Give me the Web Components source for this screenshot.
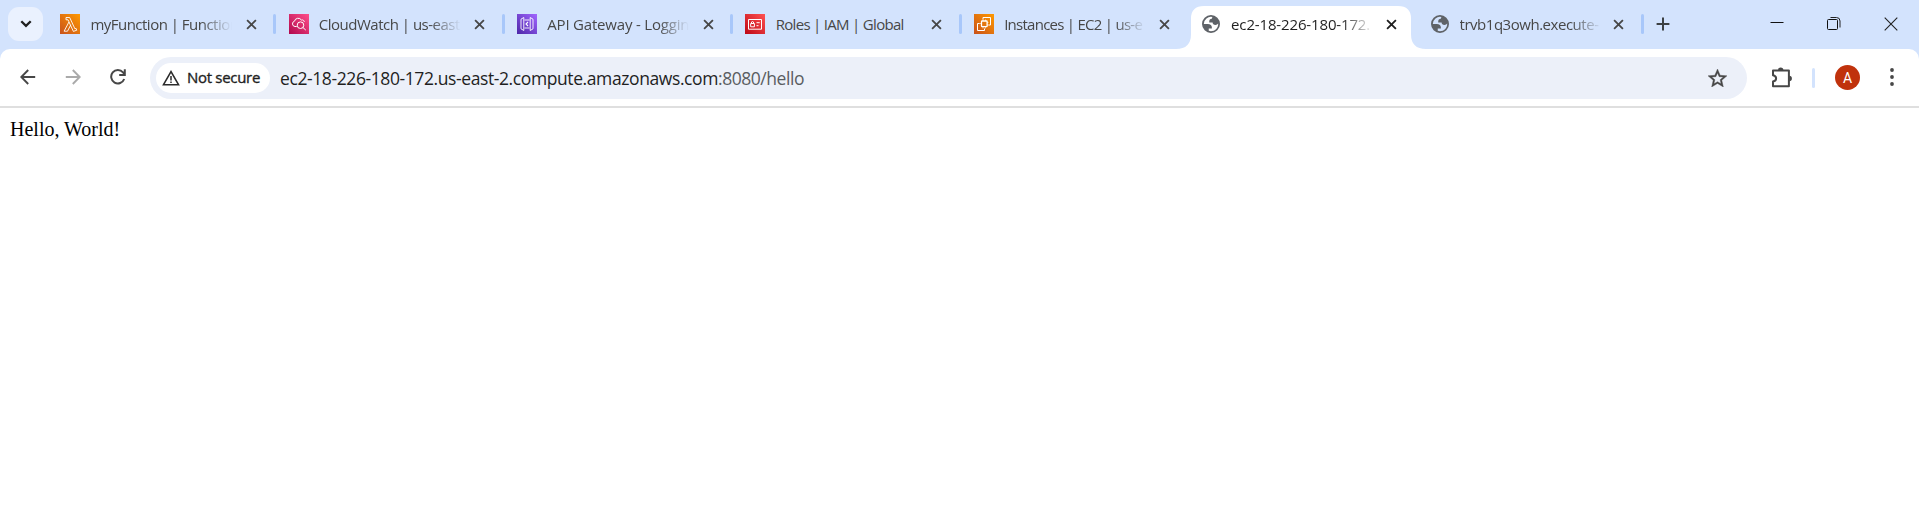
<!DOCTYPE html>
<html lang="en">
<head>
<meta charset="utf-8">
<title>ec2-18-226-180-172.us-east-2.compute.amazonaws.com:8080/hello</title>
<style>
html,body{margin:0;height:100%;overflow:hidden;background:#fff}
</style>
</head>
<body>
<browser-window></browser-window>
<script>
const define=(name,html,init)=>customElements.define(name,class extends HTMLElement{
  connectedCallback(){
    if(this.shadowRoot)return;
    this.attachShadow({mode:'open'}).innerHTML=typeof html==='function'?html(this):html;
    if(init)init.call(this,this.shadowRoot);
  }
});

const ICONS={
  chevron:['0 0 12 8','<path d="M1.3 1.3 6 5.9l4.7-4.6" fill="none" stroke="#1f1f1f" stroke-width="2.3"/>'],
  close:['0 0 12 12','<path d="M1.2 1.2l9.6 9.6M10.8 1.2 1.2 10.8" fill="none" stroke="currentColor" stroke-width="2"/>'],
  plus:['0 0 14 14','<path d="M7 .6v12.8M.6 7h12.8" fill="none" stroke="#3c4043" stroke-width="2"/>'],
  back:['0 0 16 16','<path d="M15.2 8H2M8.2 1 1.3 8l6.9 7" fill="none" stroke="#474747" stroke-width="1.9"/>'],
  forward:['0 0 16 16','<path d="M.8 8H14M7.8 1l6.9 7-6.9 7" fill="none" stroke="#aaa" stroke-width="1.9"/>'],
  reload:['0 0 16 16','<path d="M14.2 10A6.7 6.7 0 1 1 13 3.4L14.7 5.4M14.8.3v5.6H9.2" fill="none" stroke="#474747" stroke-width="2"/>'],
  warn:['0 0 18 16','<path d="M9 1.6 1.5 14.7h15Z" fill="none" stroke="#2b2b2b" stroke-width="1.6"/><path d="M9 6v4.4M9 11.4v1.6" stroke="#2b2b2b" stroke-width="1.5"/>'],
  star:['2 2 20 19','<path fill="#474747" stroke="#474747" stroke-width=".4" d="m22 9.24-7.19-.62L12 2 9.19 8.63 2 9.24l5.46 4.73L5.82 21 12 17.27 18.18 21l-1.63-7.03zM12 15.4l-3.76 2.27 1-4.28-3.32-2.88 4.38-.38L12 6.1l1.71 4.04 4.38.38-3.32 2.88 1 4.28z"/>'],
  puzzle:['0 0 21 21','<path d="M2 3.6h15.9v15.6H2v-4.7q3.1-.6 3.1-3.1T2 8.3Z" fill="none" stroke="#474747" stroke-width="2" stroke-linejoin="round"/><path d="M7 3.2a2.7 2.7 0 0 1 5.4 0ZM18.2 8.8a2.7 2.7 0 0 1 0 5.4Z" fill="#474747"/>'],
  dots:['0 0 4 18','<g fill="#474747"><circle cx="2" cy="2" r="1.9"/><circle cx="2" cy="9" r="1.9"/><circle cx="2" cy="16" r="1.9"/></g>'],
  min:['0 0 14 14','<path d="M.5 5.5h13" stroke="#111" stroke-width="1"/>'],
  restore:['0 0 14 14','<path d="M3.5 .5h6a3.5 3.5 0 0 1 3.5 3.5v6.5" fill="none" stroke="#222"/><rect x=".5" y="2.5" width="10" height="10" rx="1" fill="none" stroke="#111"/>'],
  shut:['0 0 14 14','<path d="m.7.7 12.6 12.6M13.3.7.7 13.3" fill="none" stroke="#222" stroke-width="1.1"/>'],
  globe:['2 2 20 20','<path fill="#5f6368" fill-rule="evenodd" d="M12 2a10 10 0 1 1 0 20 10 10 0 0 1 0-20ZM4 12h4.4c3.407.022 4.922 1.73 4.543 5.127H9.488v2.47a8.004 8.004 0 0 0 10.498-8.083C19.327 12.504 18.332 13 17 13c-2.137 0-3.206-.916-3.206-2.75h-3.748c-.274-2.728.683-4.092 2.87-4.092 0-.975.327-1.597.811-1.97A8 8 0 0 0 4 12Z"/>'],
  lambda:['0 0 20 20','<linearGradient id="g" x1="0" y1="1" x2="1" y2="0"><stop stop-color="#c8511b"/><stop offset="1" stop-color="#f90"/></linearGradient><path fill="url(#g)" d="M0 0h20v20H0z"/><path d="M6 3.5h3.7l5.2 11.3 1.2-.4.7 1.8-3.4 1.2-4.4-9.4M6 3.5v2.3h2l1 2.1-4.9 9.3h3.4l3.3-6.4" fill="none" stroke="#fff" stroke-width=".9" stroke-linejoin="round"/>'],
  watch:['0 0 20 20','<linearGradient id="g" x1="0" y1="1" x2="1" y2="0"><stop stop-color="#b0084d"/><stop offset="1" stop-color="#ff4f8b"/></linearGradient><path fill="url(#g)" d="M0 0h20v20H0z"/><g fill="none" stroke="#fff"><path d="M7.7 12.5H6A2.7 2.7 0 0 1 5.5 7.2 3.8 3.8 0 0 1 12.4 6c1.6-.4 2.7.4 2.9 1.9"/><circle cx="11.5" cy="11.2" r="3.3"/><path d="m13.8 13.4 3 2.7"/></g>'],
  gateway:['0 0 20 20','<linearGradient id="g" x1="0" y1="1" x2="1" y2="0"><stop stop-color="#4d27a8"/><stop offset="1" stop-color="#a166ff"/></linearGradient><path fill="url(#g)" d="M0 0h20v20H0z"/><g fill="none" stroke="#fff" stroke-width=".9"><path d="M6.8 3.5 4 5.2v9.6l2.8 1.7ZM13.2 3.5 16 5.2v9.6l-2.8 1.7ZM7.5 6h5M7.5 14h5"/><path d="m11 8-2 2 2 2" stroke-width="1.1"/></g>'],
  iam:['0 0 20 20','<linearGradient id="g" x1="0" y1="1" x2="1" y2="0"><stop stop-color="#bd0816"/><stop offset="1" stop-color="#ff5252"/></linearGradient><path fill="url(#g)" d="M0 0h20v20H0z"/><g fill="none" stroke="#fff"><path d="M3.5 5.5h13v9.7h-13z"/><path d="M5.7 9.5h3.7v3.3H5.7zM6.5 9.3V8q1-1 2 0v1.3M11.5 8.7h3.2M11.5 11.7h2"/></g>'],
  ec2:['0 0 20 20','<linearGradient id="g" x1="0" y1="1" x2="1" y2="0"><stop stop-color="#c8511b"/><stop offset="1" stop-color="#f90"/></linearGradient><path fill="url(#g)" d="M0 0h20v20H0z"/><g fill="none" stroke="#fff"><path d="M9 5.5V3.5h7.5v7.5h-2M5.7 9.5H3.5v7H10.5v-2"/><rect x="7.5" y="7" width="5.6" height="5.6" rx=".6" stroke-width="1.3"/><path d="M9 7V5.5M11.5 7V5.5M13 8.5h1.5M13 11h1.5M7.5 9.5H6M9 12.6v1.9M11.5 12.6v1.9" stroke-width=".6"/></g>']
};

define('ui-icon','<style>:host{display:block;flex:none}svg{display:block;width:100%;height:100%}</style><svg></svg>',function(r){
  const [box,body]=ICONS[this.getAttribute('name')],s=r.querySelector('svg');
  s.setAttribute('viewBox',box);s.innerHTML=body;
});

/* Text that spreads its letters evenly to a given width */
define('fit-text','<style>:host{display:inline-block;white-space:pre;flex:none}</style><span><slot></slot></span>',function(r){
  const s=r.querySelector('span'),n=this.textContent.length,w=+this.getAttribute('width');
  s.style.letterSpacing=((w-s.getBoundingClientRect().width)/n)+'px';
});

define('browser-tab',el=>`<style>
:host{display:flex;flex:none;width:228.45px;height:49px;position:relative;box-sizing:border-box;padding-left:12.1px;align-items:center;color:#474747;font:15px/20px "Open Sans","Noto Sans",sans-serif}
.fav{width:20px;height:20px;margin-top:-1px}
.title{width:142px;margin-left:10.3px;overflow:hidden;-webkit-mask:linear-gradient(90deg,#000 78%,transparent 100%);mask:linear-gradient(90deg,#000 78%,transparent 100%);margin-top:-2px}
:host([full]) .title{-webkit-mask:none;mask:none}
.x{width:11px;height:11px;margin-left:13.3px;margin-top:-1px}
.sep{width:3px;height:20px;border-radius:2px;background:#a8c7fa;margin:-2px 0 0 auto}
:host([nosep]) .sep{visibility:hidden}
:host([last]) .sep{margin-right:3px}
:host([globe]) .fav{width:18px;height:18px;margin-right:2px}
:host([globe]) .x{margin-left:12.7px}
:host([globe]) .title{margin-left:8.8px}
:host([last]) .x{margin-left:11.6px}
:host([active]){color:#1f1f1f}
.bg{display:none}
:host([active]) .bg{display:block;position:absolute;left:-14px;top:6px;width:250px;height:43px}
.fav,.title,.x{position:relative}
</style>
<svg class="bg" viewBox="0 0 250 43"><path fill="#fff" d="M0 43Q15 43 15 28V12.5Q15 0 28 0H222Q235 0 235 12.5V28Q235 43 250 43Z"/></svg>
<ui-icon class="fav" name="${el.getAttribute('icon')}"></ui-icon><div class="title"><slot></slot></div><ui-icon class="x" name="close"></ui-icon><i class="sep"></i>`);

define('tab-strip',`<style>
:host{display:flex;height:49px;background:#d3e3fd;align-items:flex-start}
.menu{box-sizing:border-box;width:35px;height:34px;margin:7px 5px 0 8px;border-radius:11px;background:#eaf1fe;display:flex;align-items:center;justify-content:center}
.menu ui-icon{width:12px;height:8px}
.plus{width:14px;height:14px;margin:17px 0 0 9px}
.win{display:flex;margin:17px 21px 0 auto;gap:43px}
.win ui-icon{width:14px;height:14px}
</style>
<div class="menu"><ui-icon name="chevron"></ui-icon></div>
<slot></slot>
<ui-icon class="plus" name="plus"></ui-icon>
<div class="win"><ui-icon name="min"></ui-icon><ui-icon name="restore"></ui-icon><ui-icon name="shut"></ui-icon></div>`);

define('address-bar',`<style>
:host{display:flex;align-items:center;box-sizing:border-box;width:1597px;height:42px;border-radius:21px;background:#ecf0f9;padding:0 20px 0 6px;font:17.5px/24px "Open Sans","Noto Sans",sans-serif;color:#1f1f1f}
.chip{box-sizing:border-box;display:flex;align-items:center;width:114px;height:30px;border-radius:15px;background:#fff;padding-left:6px;margin-right:10px;font-size:15px;font-weight:500;line-height:20px;-webkit-text-stroke:.35px #1f1f1f}
.chip ui-icon{width:18px;height:16px;margin-right:7px}
.chip fit-text{margin-top:-1px}
.url{margin-top:1px}
.path{color:#5a5d61}
.star{width:19px;height:18px;margin:1px 0 0 auto}
</style>
<div class="chip"><ui-icon name="warn"></ui-icon><fit-text width="73">Not secure</fit-text></div>
<fit-text class="url" width="438">ec2-18-226-180-172.us-east-2.compute.amazonaws.com</fit-text><fit-text class="url path" width="86">:8080/hello</fit-text>
<ui-icon class="star" name="star"></ui-icon>`);

define('tool-bar',`<style>
:host{display:block;background:#d3e3fd}
.bar{display:flex;align-items:center;box-sizing:border-box;height:59px;background:#fff;border-bottom:2px solid #dfdfdf;border-radius:10px 10px 0 0;padding:0 0 0 20px}
.nav{width:16px;height:16px;margin-right:29px}
.nav.re{margin-right:24px}
.puzzle{width:21px;height:21px;margin:-1px 0 0 24px}
.line{width:3px;height:20px;border-radius:2px;background:#d3e3fd;margin-left:20px}
.avatar{width:25px;height:25px;border-radius:50%;background:#c0320c;color:#fff;margin-left:20px;font:14px/26px Roboto,sans-serif;text-align:center}
.dots{width:4px;height:18px;margin-left:30px}
.nav,.avatar,.dots{margin-top:-1px}
</style>
<div class="bar">
<ui-icon class="nav" name="back"></ui-icon><ui-icon class="nav" name="forward"></ui-icon><ui-icon class="nav re" name="reload"></ui-icon>
<address-bar></address-bar>
<ui-icon class="puzzle" name="puzzle"></ui-icon><i class="line"></i><div class="avatar">A</div><ui-icon class="dots" name="dots"></ui-icon>
</div>`);

const TABS=[
  ['lambda','myFunction | Function',148,''],
  ['watch','CloudWatch | us-east',141,''],
  ['gateway','API Gateway - Loggin',142,''],
  ['iam','Roles | IAM | Global',128,'full'],
  ['ec2','Instances | EC2 | us-e',138,'nosep'],
  ['globe','ec2-18-226-180-172.',139,'active nosep globe'],
  ['globe','trvb1q3owh.execute-',139,'last globe']
];
define('browser-window',`<style>
:host{display:block}
main{padding:10px;font:20px/23px "Liberation Serif","Times New Roman",serif;color:#000}
</style>
<tab-strip>${TABS.map(([i,t,w,a])=>`<browser-tab icon="${i}" ${a}><fit-text width="${w}">${t}</fit-text></browser-tab>`).join('')}</tab-strip>
<tool-bar></tool-bar>
<main>Hello, World!</main>`);
</script>
</body>
</html>
